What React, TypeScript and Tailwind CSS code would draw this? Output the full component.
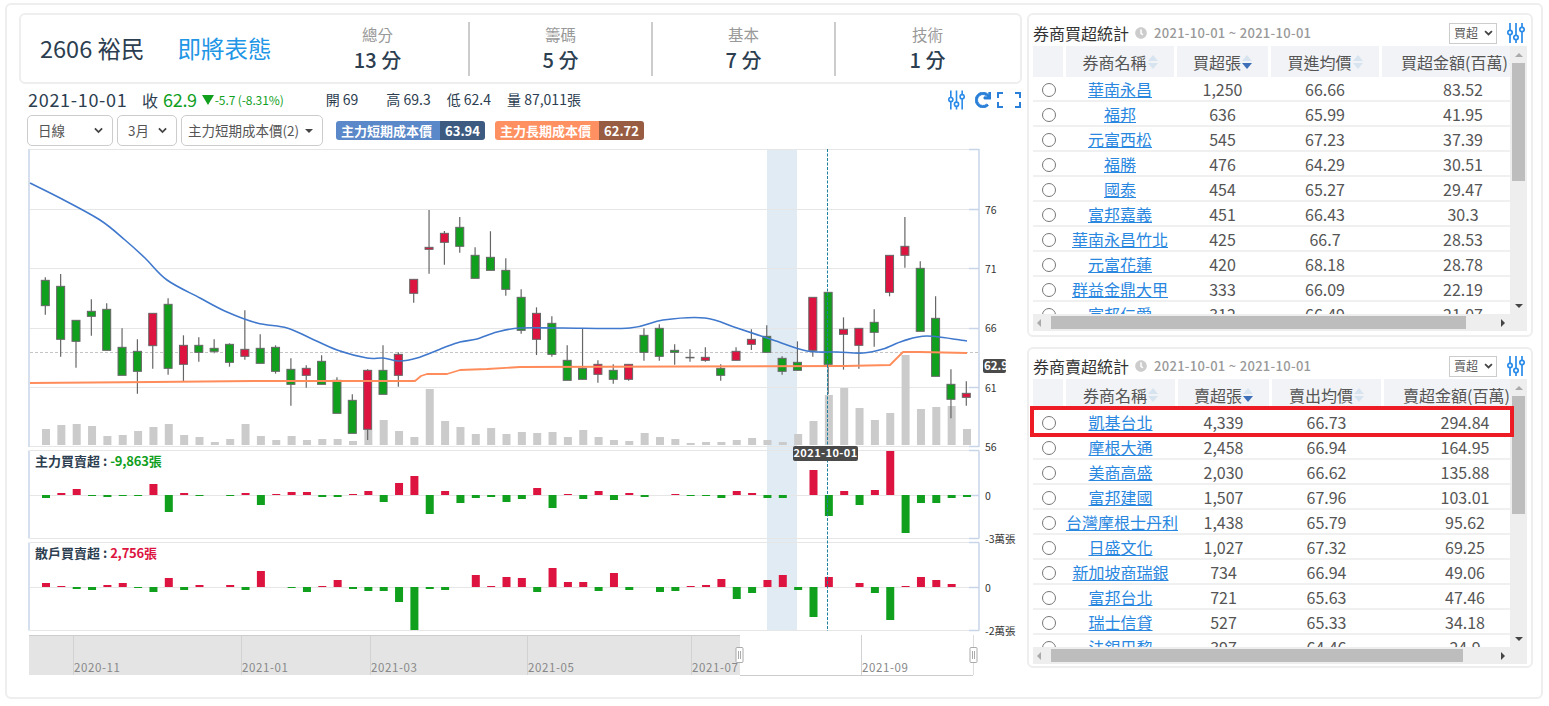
import React from "react";
import { FaRedo, FaClock } from "react-icons/fa";

const GREEN = "#119f1e";
const RED = "#dc143f";
const AXIS = "#c8d4e8";
const GRID = "#e6e6e6";

// [bodyTop, bodyBottom, wickTop, wickBottom, colour], y measured as (page y - 240) * 3
type Candle = [number, number, number, number, "g" | "r"];
const candles: Candle[] = [
  [121, 197, 112, 224, "g"], [139, 298, 102, 350, "g"], [241, 304, 241, 383, "g"], [214, 229, 178, 287, "g"],
  [208, 331, 190, 331, "g"], [322, 406, 265, 406, "g"], [334, 394, 298, 461, "g"], [220, 317, 220, 386, "r"],
  [193, 385, 175, 404, "g"], [316, 373, 286, 425, "r"], [316, 337, 292, 365, "g"], [325, 334, 298, 340, "g"],
  [313, 367, 310, 380, "g"], [328, 349, 211, 359, "r"], [325, 370, 283, 370, "g"], [322, 394, 316, 401, "g"],
  [388, 433, 355, 497, "g"], [385, 406, 376, 443, "r"], [364, 433, 346, 433, "g"], [421, 520, 412, 520, "g"],
  [481, 580, 463, 580, "g"], [391, 568, 388, 600, "r"], [391, 463, 316, 463, "g"], [343, 406, 337, 440, "r"],
  [118, 160, 118, 188, "r"], [22, 28, -90, 101, "r"], [-20, 7, -27, 74, "r"], [-38, 19, -69, 38, "g"],
  [46, 115, 22, 115, "g"], [52, 91, -26, 91, "g"], [91, 148, 55, 167, "g"], [172, 271, 148, 281, "g"],
  [220, 298, 202, 345, "r"], [250, 343, 229, 350, "g"], [361, 421, 316, 421, "g"], [385, 418, 265, 418, "g"],
  [373, 403, 361, 428, "r"], [391, 418, 373, 431, "g"], [373, 418, 373, 422, "r"], [286, 337, 265, 362, "g"],
  [265, 349, 253, 362, "g"], [331, 337, 313, 374, "g"], [352, 352, 328, 365, "g"], [352, 361, 322, 365, "r"],
  [385, 406, 373, 422, "g"], [334, 361, 322, 361, "r"], [298, 313, 268, 330, "r"], [289, 337, 256, 337, "g"],
  [355, 394, 349, 404, "g"], [367, 391, 304, 391, "g"], [172, 331, 172, 350, "r"], [157, 373, 157, 463, "g"],
  [268, 283, 232, 389, "r"], [265, 316, 265, 386, "r"], [247, 277, 208, 320, "g"], [46, 157, 46, 169, "r"],
  [19, 46, -69, 83, "r"], [85, 274, 64, 274, "g"], [235, 409, 169, 409, "g"], [433, 478, 388, 535, "g"],
  [460, 472, 424, 497, "r"],
];

const volumes = [
  567, 555, 552, 558, 588, 585, 573, 561, 552, 585, 591, 606, 597, 552, 588, 600, 588, 600, 597, 597, 603, 570, 540,
  573, 591, 447, 543, 561, 582, 564, 582, 576, 579, 576, 591, 570, 591, 600, 603, 579, 591, 597, 609, 606, 606, 600,
  594, 600, 606, 582, 543, 465, 444, 504, 540, 519, 345, 507, 501, 498, 567,
];

// bar end, y measured as (page y - 445) * 3; zero line is 150 and 426
const mainBars = [
  159, 144, 132, 153, 156, 153, 153, 117, 201, 144, 153, 150, 153, 144, 180, 147, 141, 141, 156, 156, 147, 138, 171,
  114, 93, 207, 138, 174, 159, 156, 171, 162, 129, 189, 147, 162, 138, 165, 144, 156, 150, 147, 153, 153, 159, 138,
  144, 159, 159, 150, 75, 213, 138, 180, 135, 18, 264, 174, 174, 159, 156,
];
const retailBars = [
  414, 423, 432, 435, 420, 414, 429, 441, 399, 435, 420, 426, 420, 435, 378, 426, 429, 441, 423, 405, 432, 438, 438,
  471, 555, 432, 435, 426, 390, 423, 396, 399, 441, 369, 411, 411, 438, 384, 435, 426, 441, 438, 423, 420, 402, 462,
  444, 405, 390, 435, 516, 396, 426, 414, 444, 525, 423, 396, 405, 417, 426,
];

const blueLine: [number, number][] = [
  [30, 183], [60, 198], [100, 220], [125, 240], [145, 258], [167, 280], [200, 298], [227, 312], [257, 323], [287, 328],
  [310, 338], [337, 350], [367, 358], [383, 358], [400, 361], [417, 358], [443, 348], [460, 342], [477, 339], [497, 332],
  [520, 328], [563, 328], [630, 328], [663, 320], [705, 318], [737, 328], [773, 340], [807, 351], [837, 352], [863, 353],
  [883, 349], [903, 341], [927, 336], [967, 341],
];
const orangeLine =
  "30,383 153,382 253,381 415,381 421,376 427,374 447,374 460,370 487,369 520,367 845,366 890,365 898,357 903,352 920,352 967,353";

// catmull-rom through the points, the chart lines are smoothed
const smooth = (pts: [number, number][]) => {
  let d = `M${pts[0][0]} ${pts[0][1]}`;
  for (let i = 0; i < pts.length - 1; i++) {
    const p0 = pts[Math.max(i - 1, 0)];
    const p1 = pts[i];
    const p2 = pts[i + 1];
    const p3 = pts[Math.min(i + 2, pts.length - 1)];
    const c1x = p1[0] + (p2[0] - p0[0]) / 6;
    const c1y = p1[1] + (p2[1] - p0[1]) / 6;
    const c2x = p2[0] - (p3[0] - p1[0]) / 6;
    const c2y = p2[1] - (p3[1] - p1[1]) / 6;
    d += ` C${c1x} ${c1y} ${c2x} ${c2y} ${p2[0]} ${p2[1]}`;
  }
  return d;
};

const barX = (i: number) => 46 + i * 15.35;
const priceLines = [149.5, 209.5, 268.5, 328.5, 387.5, 446.5];

const Chart = () => (
  <svg width={1002} height={532} viewBox="20 148 1002 532" className="block ml-[1px]">
    {/* highlighted week */}
    <rect x={767} y={149} width={30} height={482} fill="#e1ebf4" />

    {/* price grid */}
    {priceLines.map((y) => (
      <line key={y} x1={30} x2={979} y1={y} y2={y} stroke={GRID} strokeWidth={1} />
    ))}
    <line x1={30} x2={979} y1={352.5} y2={352.5} stroke="#c4c4c4" strokeWidth={1} strokeDasharray="3 2" />
    <line x1={29} x2={29} y1={149} y2={447} stroke={AXIS} strokeWidth={1.5} />
    <line x1={979} x2={979} y1={149} y2={447} stroke={AXIS} strokeWidth={1.5} />
    {priceLines.map((y) => (
      <line key={y} x1={969} x2={979} y1={y} y2={y} stroke={AXIS} strokeWidth={1.5} />
    ))}
    {[
      ["76", 210],
      ["71", 269],
      ["66", 328],
      ["61", 388],
      ["56", 447],
    ].map(([t, y]) => (
      <text key={t} x={985} y={Number(y) + 4} fontSize={10.5} fill="#333">
        {t}
      </text>
    ))}

    {/* volume */}
    {volumes.map((z, i) => (
      <rect key={i} x={barX(i) - 4} y={240 + z / 3} width={8} height={(615 - z) / 3} fill="#cbcbcb" />
    ))}

    {/* candles */}
    {candles.map(([top, bot, wt, wb, c], i) => {
      const x = barX(i) - 0.7;
      return (
        <g key={i}>
          <line x1={x} x2={x} y1={240 + wt / 3} y2={240 + wb / 3} stroke="#666" strokeWidth={1.2} />
          <rect
            x={x - 4}
            y={240 + top / 3}
            width={8}
            height={Math.max((bot - top) / 3, 0.5)}
            fill={c === "g" ? GREEN : RED}
            stroke="#666"
            strokeWidth={1}
          />
        </g>
      );
    })}

    <polyline points={orangeLine} fill="none" stroke="#ff8c5a" strokeWidth={1.8} strokeLinejoin="round" />
    <path d={smooth(blueLine)} fill="none" stroke="#3f78cc" strokeWidth={1.6} />

    {/* sub chart frames */}
    {[
      [450.5, 538.5, 495.5],
      [542.5, 630.5, 587.5],
    ].map(([top, bottom, zero]) => (
      <g key={top}>
        <line x1={30} x2={979} y1={top} y2={top} stroke={GRID} strokeWidth={1} />
        <line x1={30} x2={979} y1={bottom} y2={bottom} stroke={GRID} strokeWidth={1} />
        <line x1={30} x2={979} y1={zero} y2={zero} stroke={GRID} strokeWidth={1} />
        <line x1={29} x2={29} y1={top} y2={bottom} stroke={AXIS} strokeWidth={1.5} />
        <line x1={979} x2={979} y1={top} y2={bottom} stroke={AXIS} strokeWidth={1.5} />
        {[top, zero, bottom].map((y) => (
          <line key={y} x1={969} x2={979} y1={y} y2={y} stroke={AXIS} strokeWidth={1.5} />
        ))}
      </g>
    ))}

    {mainBars.map((z, i) =>
      z === 150 ? null : (
        <rect
          key={i}
          x={barX(i) - 4}
          y={445 + Math.min(z, 150) / 3}
          width={8}
          height={Math.abs(z - 150) / 3}
          fill={z < 150 ? RED : GREEN}
        />
      )
    )}
    {retailBars.map((z, i) =>
      z === 426 ? null : (
        <rect
          key={i}
          x={barX(i) - 4}
          y={445 + Math.min(z, 426) / 3}
          width={8}
          height={Math.abs(z - 426) / 3}
          fill={z < 426 ? RED : GREEN}
        />
      )
    )}

    <text x={35} y={466} fontSize={13} fontWeight={700} fill="#2c3e50">
      主力買賣超 : <tspan fill={GREEN} letterSpacing={-0.2}>-9,863張</tspan>
    </text>
    <text x={35} y={558} fontSize={13} fontWeight={700} fill="#2c3e50">
      散戶買賣超 : <tspan fill={RED} letterSpacing={-0.2}>2,756張</tspan>
    </text>
    <text x={985} y={500} fontSize={10.5} fill="#333">0</text>
    <text x={985} y={543} fontSize={10.5} fill="#333">-3萬張</text>
    <text x={985} y={592} fontSize={10.5} fill="#333">0</text>
    <text x={985} y={635} fontSize={10.5} fill="#333">-2萬張</text>

    {/* cross hair */}
    <line x1={827.5} x2={827.5} y1={149} y2={631} stroke="#1f7f9f" strokeWidth={1} strokeDasharray="3 1.5" />
    <rect x={793} y={446} width={65} height={15} rx={2} fill="#4a4a4a" />
    <text x={825.5} y={457} fontSize={11} fontWeight={700} fill="#fff" textAnchor="middle" letterSpacing={0.4}>
      2021-10-01
    </text>
    <rect x={983} y={359} width={23} height={14} rx={2} fill="#4a4a4a" />
    <text x={984} y={370} fontSize={11.5} fontWeight={700} fill="#fff">
      62.9
    </text>

    {/* zoom navigator */}
    <rect x={29} y={635} width={711} height={40} fill="#e4e4e4" />
    <line x1={29} x2={740} y1={635.5} y2={635.5} stroke="#cccccc" />
    <line x1={740} x2={973} y1={675.5} y2={675.5} stroke="#cccccc" />
    <line x1={973.5} x2={973.5} y1={635} y2={675} stroke="#dddddd" />
    {[
      [73, "2020-11"],
      [241, "2021-01"],
      [370, "2021-03"],
      [527, "2021-05"],
      [691, "2021-07"],
      [861, "2021-09"],
    ].map(([x, t]) => (
      <g key={t as string}>
        <line x1={Number(x) + 0.5} x2={Number(x) + 0.5} y1={635} y2={675} stroke="#d2d2d2" />
        <text x={Number(x) + 1} y={672} fontSize={11.5} fill="#888" letterSpacing={0.6}>
          {t}
        </text>
      </g>
    ))}
    {[739.5, 973.5].map((x) => (
      <g key={x}>
        <rect x={x - 3.5} y={647.5} width={7} height={15} rx={1} fill="#fff" stroke="#aaa" />
        <line x1={x - 1} x2={x - 1} y1={651} y2={659} stroke="#aaa" />
        <line x1={x + 1} x2={x + 1} y1={651} y2={659} stroke="#aaa" />
      </g>
    ))}
  </svg>
);

const SlidersIcon = ({ className }: { className: string }) => (
  <svg viewBox="0 0 18 20" className={className} fill="none" stroke="#2a8be8" strokeWidth={1.7}>
    <path d="M3 0v7M3 12v8M9 0v12M9 17v3M15 0v4M15 9v11" />
    <circle cx={3} cy={9.5} r={2.2} />
    <circle cx={9} cy={14.5} r={2.2} />
    <circle cx={15} cy={6.5} r={2.2} />
  </svg>
);

const ExpandIcon = () => (
  <svg viewBox="0 0 24 16" className="w-[24px] h-[16px]" fill="none" stroke="#2a7fd8" strokeWidth={2}>
    <path d="M6 1H1v5M1 10v5h5M18 1h5v5M23 10v5h-5" />
  </svg>
);

const Chevron = ({ className }: { className: string }) => (
  <svg viewBox="0 0 10 7" className={className} fill="none" stroke="#444" strokeWidth={2}>
    <path d="M1 1.2l4 4 4-4" />
  </svg>
);

const SortIcon = ({ active }: { active?: boolean }) => (
  <svg viewBox="0 0 10 14" className="w-[10px] h-[14px] ml-[1px] shrink-0">
    <path d="M5 0l5 6H0z" fill="#d7e3ef" />
    <path d="M5 14l5-6H0z" fill={active ? "#3c6fb8" : "#d7e3ef"} />
  </svg>
);

const Score = ({ label, value, last }: { label: string; value: string; last?: boolean }) => (
  <div
    className={`w-[183px] h-[54px] flex flex-col items-center justify-center ${
      last ? "" : "border-r-2 border-[#cccccc]"
    }`}
  >
    <div className="text-[15.5px] leading-[22px] text-[#999999]">{label}</div>
    <div className="text-[20px] leading-[30px] font-medium text-[#2c3e50]">{value}</div>
  </div>
);

const SelectBox = ({ label, className, caret }: { label: string; className: string; caret?: boolean }) => (
  <div
    className={`${className} h-[31px] flex items-center justify-between pr-[9px] border border-[#cccccc] rounded-[5px] text-[13.5px] text-[#555555] whitespace-nowrap`}
  >
    <span>{label}</span>
    {caret ? (
      <span className="w-0 h-0 border-x-[4px] border-x-transparent border-t-[4px] border-t-[#444444]" />
    ) : (
      <Chevron className="w-[9px] h-[7px]" />
    )}
  </div>
);

const Badge = ({ label, value, light, dark }: { label: string; value: string; light: string; dark: string }) => (
  <div className="flex h-[19px] rounded-[3px] overflow-hidden text-[13px] leading-[19px] font-bold text-white">
    <div className={`${light} w-[104px] pl-[5px]`}>{label}</div>
    <div className={`${dark} w-[45px] text-center`}>{value}</div>
  </div>
);

type Row = [string, string, string, string];

const buyRows: Row[] = [
  ["華南永昌", "1,250", "66.66", "83.52"],
  ["福邦", "636", "65.99", "41.95"],
  ["元富西松", "545", "67.23", "37.39"],
  ["福勝", "476", "64.29", "30.51"],
  ["國泰", "454", "65.27", "29.47"],
  ["富邦嘉義", "451", "66.43", "30.3"],
  ["華南永昌竹北", "425", "66.7", "28.53"],
  ["元富花蓮", "420", "68.18", "28.78"],
  ["群益金鼎大甲", "333", "66.09", "22.19"],
  ["富邦仁愛", "312", "66.49", "21.07"],
];

const sellRows: Row[] = [
  ["凱基台北", "4,339", "66.73", "294.84"],
  ["摩根大通", "2,458", "66.94", "164.95"],
  ["美商高盛", "2,030", "66.62", "135.88"],
  ["富邦建國", "1,507", "67.96", "103.01"],
  ["台灣摩根士丹利", "1,438", "65.79", "95.62"],
  ["日盛文化", "1,027", "67.32", "69.25"],
  ["新加坡商瑞銀", "734", "66.94", "49.06"],
  ["富邦台北", "721", "65.63", "47.46"],
  ["瑞士信貸", "527", "65.33", "34.18"],
  ["法銀巴黎", "397", "64.46", "24.9"],
];

const BrokerPanel = ({
  title,
  mode,
  heads,
  rows,
  cols,
  thumbWidth,
  className,
  highlight,
}: {
  title: string;
  mode: string;
  heads: string[];
  rows: Row[];
  cols: string;
  thumbWidth: string;
  className: string;
  highlight?: boolean;
}) => (
  <div className={`relative ${className} border-2 border-[#eeeeee] rounded-md px-[4px]`}>
    <div className="h-[22px] flex items-center">
      <span className="text-[16px] text-[#333333]">{title}</span>
      <FaClock className="ml-[6px] w-[12px] h-[12px] text-[#cccccc]" />
      <span className="ml-[7px] text-[13px] font-medium tracking-[0.3px] text-[#999999]">2021-10-01 ~ 2021-10-01</span>
      <div className="ml-auto w-[48px] h-[21px] flex items-center justify-between pl-[4px] pr-[3px] border border-[#cccccc] text-[12px] text-[#555555]">
        <span>{mode}</span>
        <Chevron className="w-[9px] h-[6px]" />
      </div>
      <SlidersIcon className="ml-[10px] mr-[2px] w-[18px] h-[22px]" />
    </div>
    <div className="mt-[2px] flex">
      <div className="w-[477px]">
        <div className="h-[268px] overflow-hidden">
          <div className={`grid ${cols} gap-x-[3px] h-[31px] w-[560px]`}>
            <div className="bg-[#f1f3f6]" />
            {heads.map((h, i) => (
              <div
                key={h}
                className={`bg-[#f1f3f6] flex items-center justify-center text-[16px] text-[#555555] whitespace-nowrap ${
                  i === 3 ? "pr-[6px]" : ""
                }`}
              >
                {h}
                <SortIcon active={i === 1} />
              </div>
            ))}
          </div>
          {rows.map((r) => (
            <div
              key={r[0]}
              className={`grid ${cols} gap-x-[3px] h-[25px] pt-[1px] w-[560px] border-b-2 border-[#f0f0f0] items-center text-[16px] leading-[23px] text-[#555555] text-center whitespace-nowrap`}
            >
              <div className="flex justify-center pl-[2px]">
                <span className="w-[14px] h-[14px] rounded-full border border-[#777777] bg-white" />
              </div>
              <a className="text-[#2a87e0] underline">{r[0]}</a>
              <div>{r[1]}</div>
              <div>{r[2]}</div>
              <div>{r[3]}</div>
            </div>
          ))}
        </div>
        {/* horizontal scrollbar */}
        <div className="h-[17px] bg-[#eeeeee] flex items-center">
          <span className="ml-[4px] w-0 h-0 border-y-[4px] border-y-transparent border-r-[4px] border-r-[#aaaaaa]" />
          <div className={`ml-[10px] h-[13px] ${thumbWidth} bg-[#bdbdbd]`} />
          <span className="ml-auto mr-[5px] w-0 h-0 border-y-[4px] border-y-transparent border-l-[4px] border-l-[#444444]" />
        </div>
      </div>
      {/* vertical scrollbar */}
      <div className="w-[17px] bg-[#eeeeee] flex flex-col items-center">
        <div className="h-[17px] flex items-center">
          <span className="w-0 h-0 border-x-[4px] border-x-transparent border-b-[4px] border-b-[#aaaaaa]" />
        </div>
        <div className="h-[118px] w-[13px] bg-[#bdbdbd]" />
        <div className="mt-auto h-[34px] flex items-start pt-[7px]">
          <span className="w-0 h-0 border-x-[4px] border-x-transparent border-t-[4px] border-t-[#444444]" />
        </div>
      </div>
    </div>
    {highlight && <div className="absolute left-[1px] top-[57px] w-[484px] h-[31px] border-[4px] border-[#ed1c24]" />}
  </div>
);

export default function App() {
  return (
    <div className="w-[1549px] h-[706px] bg-white pt-[3px] pl-[5px] font-['Noto_Sans_CJK_TC','Noto_Sans',sans-serif]">
      <div className="w-[1538px] h-[696px] border-2 border-[#eeeeee] rounded-md pt-[8px] pl-[12px] flex gap-[5px] overflow-hidden">
        {/* left column */}
        <div className="w-[1003px]">
          <div className="h-[71px] border-2 border-[#eeeeee] rounded-md flex items-center">
            <div className="w-[266px] pl-[19px] flex text-[23.5px] text-[#2c3e50] whitespace-nowrap">
              <span>2606 裕民</span>
              <span className="ml-[33px] text-[#2196e6]">即將表態</span>
            </div>
            <Score label="總分" value="13 分" />
            <Score label="籌碼" value="5 分" />
            <Score label="基本" value="7 分" />
            <Score label="技術" value="1 分" last />
          </div>

          <div className="h-[31px] flex items-center pl-[9px] text-[#2c3e50] whitespace-nowrap">
            <span className="text-[18px] tracking-[0.7px] w-[114px]">2021-10-01</span>
            <span className="text-[16px]">收</span>
            <span className="ml-[5px] text-[18px] tracking-[-0.3px] text-[#119f1e]">62.9</span>
            <span className="ml-[5px] w-0 h-0 border-x-[6px] border-x-transparent border-t-[10px] border-t-[#119f1e]" />
            <span className="ml-[1px] text-[12px] tracking-[-0.1px] text-[#119f1e]">-5.7 (-8.31%)</span>
            <span className="ml-[42px] text-[14px]">開 69</span>
            <span className="ml-[28px] text-[14px]">高 69.3</span>
            <span className="ml-[16px] text-[14px]">低 62.4</span>
            <span className="ml-[16px] text-[14px]">量 87,011張</span>
            <div className="ml-auto flex items-center">
              <SlidersIcon className="w-[17px] h-[20px]" />
              <FaRedo className="ml-[10px] w-[16px] h-[16px] text-[#2a7fd8]" stroke="currentColor" strokeWidth={30} />
              <span className="ml-[6px] mr-[1px]">
                <ExpandIcon />
              </span>
            </div>
          </div>

          <div className="h-[33px] flex items-start pl-[8px] gap-[4px]">
            <SelectBox label="日線" className="w-[86px] pl-[10px]" />
            <SelectBox label="3月" className="w-[60px] pl-[10px]" />
            <SelectBox label="主力短期成本價(2)" className="w-[142px] pl-[6px]" caret />
            <div className="ml-[9px] mt-[6px] flex gap-[10px]">
              <Badge label="主力短期成本價" value="63.94" light="bg-[#5a88c8]" dark="bg-[#3d5a80]" />
              <Badge label="主力長期成本價" value="62.72" light="bg-[#ff9062]" dark="bg-[#985c42]" />
            </div>
          </div>

          <Chart />
        </div>

        {/* right column */}
        <div className="w-[506px] flex flex-col gap-[10px]">
          <BrokerPanel
            title="券商買超統計"
            mode="買超"
            heads={["券商名稱", "買超張", "買進均價", "買超金額(百萬)"]}
            rows={buyRows}
            cols="grid-cols-[30px_108px_91px_108px_162px]"
            thumbWidth="w-[415px]"
            className="h-[324px] pt-[7px]"
          />
          <BrokerPanel
            title="券商賣超統計"
            mode="賣超"
            heads={["券商名稱", "賣超張", "賣出均價", "賣超金額(百萬)"]}
            rows={sellRows}
            cols="grid-cols-[30px_109px_91px_109px_162px]"
            thumbWidth="w-[412px]"
            className="h-[321px] pt-[6px]"
            highlight
          />
        </div>
      </div>
    </div>
  );
}
